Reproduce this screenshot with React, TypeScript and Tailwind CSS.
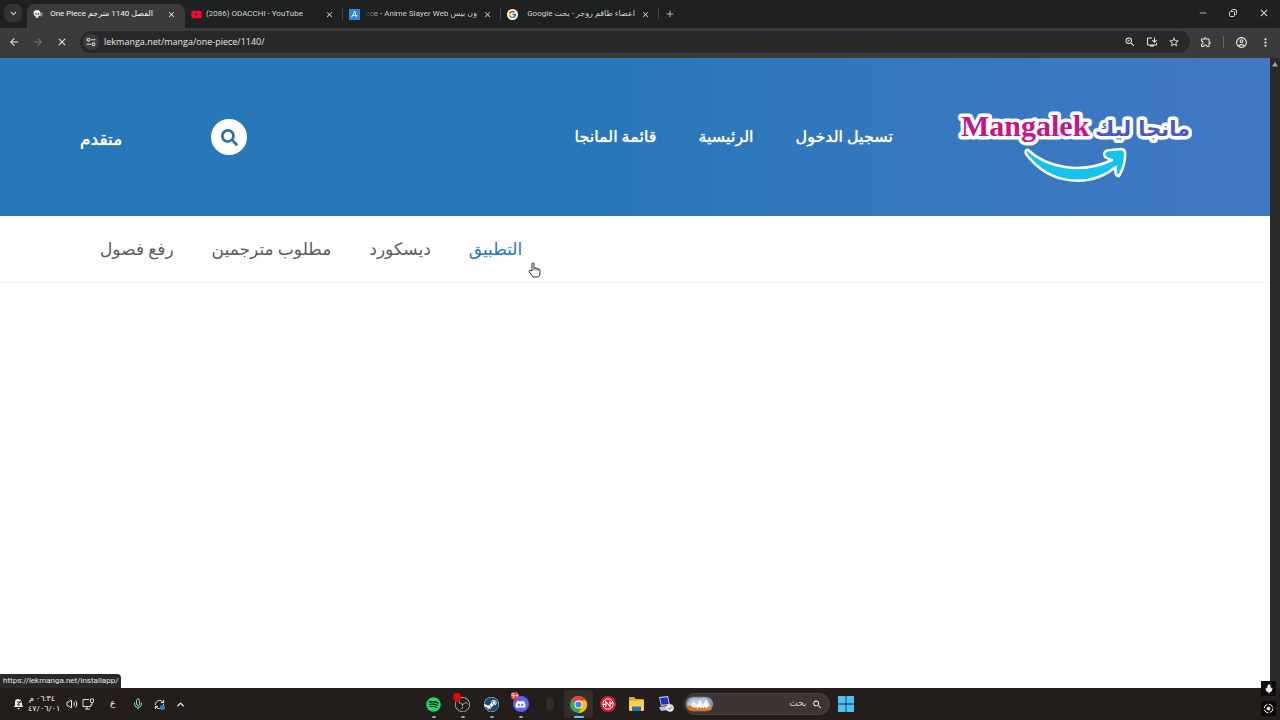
import type { ReactNode } from "react";
import { FcGoogle } from "react-icons/fc";
import { FaDiscord, FaSearch, FaSpotify, FaSteam, FaYoutube } from "react-icons/fa";
import {
  MdArrowBack,
  MdArrowForward,
  MdClose,
  MdInstallDesktop,
  MdMoreVert,
  MdOutlineAccountCircle,
  MdOutlineExtension,
  MdSearch,
  MdStarBorder,
  MdZoomIn,
} from "react-icons/md";
import { ChevronDown, ChevronUp, Mic, Minus, Plus, RefreshCw, Volume2 } from "lucide-react";
import { SiObsstudio } from "react-icons/si";

interface Tab {
  title: string;
  icon: ReactNode;
  rtl?: boolean;
  faded?: boolean;
}

const TABS: Tab[] = [
  { title: "الفصل 1140 مترجم One Piece", icon: <SkullIcon />, rtl: true },
  { title: "(2086) ODACCHI - YouTube", icon: <FaYoutube size={11} color="#ff0033" /> },
  { title: "ون بيس ece - Anime Slayer Web", icon: <SlayerIcon />, rtl: true, faded: true },
  {
    title: "اعضاء طاقم روجر - بحث Google",
    icon: (
      <span className="rounded-full bg-white p-px">
        <FcGoogle size={9} />
      </span>
    ),
    rtl: true,
  },
];

const MENU = ["قائمة المانجا", "الرئيسية", "تسجيل الدخول"];
const SUB_MENU = ["رفع فصول", "مطلوب مترجمين", "ديسكورد", "التطبيق"];

function SkullIcon() {
  return (
    <svg width="10" height="10" viewBox="0 0 10 10">
      <path d="M0 3 1.5 2 9.5 6 9.5 7 8 7.5 1 4ZM5 4 9.5 3.5 9.5 5 6 6Z" fill="#999" />
      <circle cx="4" cy="4.3" r="3.3" fill="#eee" />
      <path d="M2.3 4.3h1.3v1.5H2.3zM4.7 4.3H6v1.5H4.7z" fill="#333" />
      <path d="M2.7 6.8h2.8v2H2.7z" fill="#ddd" />
    </svg>
  );
}

function SlayerIcon() {
  return (
    <svg width="11" height="11" viewBox="0 0 11 11">
      <rect width="11" height="11" fill="#2f87d2" />
      <path d="M2.5 8.5 5.8 2.2 7.5 8.5M3.6 6.5h4.7" fill="none" stroke="#cfe8fb" strokeWidth="1" />
    </svg>
  );
}

function TuneIcon() {
  return (
    <svg width="10" height="10" viewBox="0 0 10 10" fill="none" stroke="#d6d6d6" strokeWidth="1.1">
      <circle cx="2.5" cy="2.7" r="1.4" />
      <path d="M5 2.7h4.5M.5 7.3H5" />
      <circle cx="7.5" cy="7.3" r="1.4" />
    </svg>
  );
}

function Logo() {
  return (
    <svg width="236" height="80" viewBox="0 0 236 80" role="img" aria-label="Mangalek">
      <g strokeLinejoin="round" stroke="#fff" strokeWidth="7" paintOrder="stroke" fontWeight="700">
        <text x="5" y="33" fontSize="30" fill="#c2178a" fontFamily="'Liberation Serif', serif">
          Mangalek
        </text>
        <text x="139" y="33" fontSize="21" fill="#4a58c4" fontFamily="'DejaVu Sans', sans-serif">
          مانجا ليك
        </text>
      </g>
      <path
        d="M72 47C90 64 125 72 156 57Q152 56 149 54Q146 47 155 47L166 46Q170 47 169 53Q169 63 163 73Q158 73 160 64C135 84 95 84 70 51Q69 46 72 47Z"
        fill="#14c4ee"
        stroke="#fff"
        strokeWidth="2.5"
        strokeLinejoin="round"
      />
    </svg>
  );
}

function BrowserTab({ tab, active }: { tab: Tab; active: boolean }) {
  return (
    <div
      className={`flex h-6 w-[158px] items-center gap-1 pb-1 pl-[5px] pr-2 ${
        active ? "rounded-t-lg bg-[#3b3b3b] text-gray-100" : "text-gray-300"
      }`}
    >
      <span className="flex w-3 shrink-0 justify-center">{tab.icon}</span>
      <span
        dir={tab.rtl ? "rtl" : "ltr"}
        className={`min-w-0 grow overflow-hidden whitespace-nowrap ${
          tab.faded ? "[mask-image:linear-gradient(to_right,transparent,black_16px)]" : ""
        } ${active ? "pr-2" : ""}`}
      >
        {tab.title}
      </span>
      <button aria-label="Close tab" className="flex w-3 shrink-0 justify-center">
        <MdClose size={9} />
      </button>
    </div>
  );
}

function TabStrip() {
  return (
    <div className="flex h-7 items-end bg-[#1f2020] pl-1 text-[8px] text-gray-300">
      <button aria-label="Search tabs" className="mb-[6px] flex h-[18px] w-[18px] items-center justify-center rounded-md bg-[#333]">
        <ChevronDown size={9} strokeWidth={3} />
      </button>
      <div className="ml-[5px] flex">
        {TABS.map((tab, i) => (
          <div key={tab.title} className="flex items-center">
            <BrowserTab tab={tab} active={i === 0} />
            {i > 0 && <span className="-ml-px mb-1 h-3 w-px bg-[#444]" />}
          </div>
        ))}
      </div>
      <button aria-label="New tab" className="mb-[9px] ml-[6px]">
        <Plus size={10} />
      </button>
      <div className="mb-[9px] ml-auto flex items-center gap-5 pr-[10px]">
        <button aria-label="Minimize">
          <Minus size={10} />
        </button>
        <button aria-label="Restore">
          <svg width="10" height="10" viewBox="0 0 10 10" fill="none" stroke="currentColor">
            <rect x="1.5" y="3.5" width="5" height="5" rx="1" />
            <path d="M3.5 3V2.5Q3.5 1.5 4.5 1.5H7Q8.5 1.5 8.5 3V5.5Q8.5 6.5 7.5 6.5H7" />
          </svg>
        </button>
        <button aria-label="Close">
          <MdClose size={12} />
        </button>
      </div>
    </div>
  );
}

function Toolbar() {
  return (
    <div className="flex h-[30px] items-center bg-[#3b3b3b] px-2 pb-[2px] text-gray-200">
      <div className="flex gap-3">
        <button aria-label="Back">
          <MdArrowBack size={12} />
        </button>
        <button aria-label="Forward" className="text-gray-500">
          <MdArrowForward size={12} />
        </button>
        <button aria-label="Stop">
          <MdClose size={12} />
        </button>
      </div>
      <div className="ml-3 flex h-[22px] grow items-center gap-1 rounded-full bg-[#282828] pl-[3px] pr-[10px]">
        <button aria-label="Site information" className="flex h-4 w-4 items-center justify-center rounded-full bg-[#3b3b3b]">
          <TuneIcon />
        </button>
        <input
          aria-label="Address"
          className="min-w-0 grow bg-transparent pl-px font-['Open_Sans',sans-serif] text-[9px] text-gray-200 outline-none"
          defaultValue="lekmanga.net/manga/one-piece/1140/"
        />
        <div className="flex items-center gap-[10px]">
          <MdZoomIn size={12} />
          <MdInstallDesktop size={12} />
          <MdStarBorder size={12} />
        </div>
      </div>
      <div className="ml-[10px] flex items-center gap-[11px]">
        <MdOutlineExtension size={12} />
        <span className="h-3 w-px bg-[#666]" />
        <MdOutlineAccountCircle size={13} />
        <MdMoreVert size={13} />
      </div>
    </div>
  );
}

function SiteHeader() {
  return (
    <header className="flex h-[158px] items-center bg-linear-to-r from-[#2777b9] from-45% to-[#4178c4] pl-20 pr-[78px] text-white [text-shadow:0_0_1px_#fff]">
      <a href="#advanced" className="mt-[6px] w-[42px] whitespace-nowrap text-[17px]">
        متقدم
      </a>
      <button aria-label="بحث" className="ml-[89px] flex h-9 w-9 items-center justify-center rounded-full bg-white text-[#2f6fa8]">
        <FaSearch size={17} />
      </button>
      <nav className="ml-auto flex gap-[42px] text-[16px]">
        {MENU.map((item) => (
          <a key={item} href="#menu" className="whitespace-nowrap">
            {item}
          </a>
        ))}
      </nav>
      <a href="#home" className="ml-[63px] mt-3 [text-shadow:none]">
        <Logo />
      </a>
    </header>
  );
}

function SubNav() {
  return (
    <nav className="relative flex h-[67px] items-center gap-[38px] border-b border-gray-100 pl-[100px] pt-[2px] text-[17px] text-[#5c5c5c]">
      {SUB_MENU.map((item) => (
        <a
          key={item}
          href="#submenu"
          className={`whitespace-nowrap ${item === "التطبيق" ? "text-[#2777b9]" : ""}`}
        >
          {item}
        </a>
      ))}
      <svg className="absolute left-[528px] top-[46px]" width="13" height="16" viewBox="0 0 13 16">
        <path
          d="M4 9V2Q4 .8 5 .8T6 2V6Q7 5 8 6.3Q9 5.6 9.8 6.8Q12 6.5 12 8.5V11Q12 13 10.5 15H5Q3.5 12.5 1.2 9.8Q.8 8 2.2 8.3Z"
          fill="#fff"
          stroke="#333"
        />
        <path d="M6 6v2.5M8 6.5v2M10 7v2" stroke="#333" strokeWidth=".8" />
      </svg>
    </nav>
  );
}

function ChromeIcon() {
  return (
    <svg width="17" height="17" viewBox="0 0 18 18">
      <circle cx="9" cy="9" r="9" fill="#34a853" />
      <path d="M9 9 1.2 4.5A9 9 0 0 1 16.8 4.5Z" fill="#ea4335" />
      <path d="M9 4.7H17A9 9 0 0 1 9 18L12.8 11Z" fill="#fbbc04" />
      <circle cx="9" cy="9" r="4.3" fill="#fff" />
      <circle cx="9" cy="9" r="3.3" fill="#4285f4" />
    </svg>
  );
}

function RedAppIcon() {
  return (
    <svg width="16" height="16" viewBox="0 0 16 16" fill="none" stroke="#fff">
      <circle cx="8" cy="8" r="8" fill="#c81e36" stroke="none" />
      <circle cx="8" cy="8" r="5.2" strokeWidth=".9" />
      <path d="M5.8 11V5.5L10 10.5V5M3 9 5.8 8M10 8 13 6.5" strokeWidth="1.1" />
    </svg>
  );
}

function FolderIcon() {
  return (
    <svg width="17" height="16" viewBox="0 0 17 16">
      <path d="M1 1H6L8 3H15Q16 3 16 4V8H1Z" fill="#e0a526" />
      <rect x="1" y="4.5" width="15" height="10.5" rx="1" fill="#fbd04f" />
      <path d="M4 15V11.5Q4 10.5 5 10.5H12Q13 10.5 13 11.5V15Z" fill="#1977c0" />
    </svg>
  );
}

function RemoteIcon() {
  return (
    <svg width="16" height="16" viewBox="0 0 16 16">
      <path d="M1 1 10 0 12 9 3 10Z" fill="#c9d1e4" />
      <path d="M2 2 9.3 1.2 10.8 8 3.6 8.8Z" fill="#1e2fb8" />
      <path d="M1 11 9 10 10 14 3 15Z" fill="#bfc6d2" />
      <circle cx="12" cy="12" r="3.8" fill="#e8e8e8" />
      <path d="m10 12 1.5 1.5L14 10.5" fill="none" stroke="#777" />
    </svg>
  );
}

function SceneIcon() {
  return (
    <svg width="33" height="18" viewBox="0 0 33 18">
      <rect width="33" height="18" rx="9" fill="#8298bd" />
      <path d="M2 8Q6 1 12 2T22 1L27 4 30 12H3Z" fill="#b9c6dc" />
      <path d="M5 12 9 5 13 10 17 4 21 10 25 3 29 13H5Z" fill="#eef0f3" />
      <path d="M2 12Q5 9 9 13T17 13L22 15Q27 9 32 15Q28 18 21 17L8 18Q3 17 2 12Z" fill="#e0701a" />
      <path d="M7 14Q11 11 14 15M24 15Q27 12 29 15" stroke="#ffb347" strokeWidth="1.2" fill="none" />
      <path d="M14 14 17 6 18 14M21 14 24 6 25 14" stroke="#fff" strokeWidth="1.5" fill="none" />
    </svg>
  );
}

function WindowsIcon() {
  return (
    <svg width="16" height="16" viewBox="0 0 16 16" fill="#4cc2f1">
      <path d="M0 0h7.6v7.6H0zM8.4 0H16v7.6H8.4zM0 8.4h7.6V16H0zM8.4 8.4H16V16H8.4z" />
    </svg>
  );
}

function TaskApp({ label, running, active, children }: { label: string; running?: boolean; active?: boolean; children: ReactNode }) {
  return (
    <button
      aria-label={label}
      className={`relative flex h-7 w-[29px] items-center justify-center rounded ${active ? "bg-[#342e2b]" : ""}`}
    >
      {children}
      {running && (
        <span className={`absolute bottom-0 h-[2px] rounded ${active ? "w-[10px] bg-[#65c5f2]" : "w-1 bg-gray-400"}`} />
      )}
    </button>
  );
}

function Taskbar() {
  return (
    <footer className="relative flex h-8 items-center bg-[#231e1c] text-gray-100">
      <div className="flex w-[419px] items-center pl-[13px]">
        <svg width="11" height="12" viewBox="0 0 11 12">
          <path d="M1 9H10L9 7V4Q9 1 5.5 1T2 4V7ZM4 10H7L5.5 11.5Z" fill="#eee" />
          <path d="M6 1h4L7 4h3M4 4h3L4.5 7H7" fill="none" stroke="#231e1c" />
        </svg>
        <div className="ml-1 w-[28px] text-[8px] leading-[10px] whitespace-nowrap">
          <div dir="rtl" className="text-center">٠٦:٣٤ م</div>
          <div dir="ltr">٤٧/٠٦/٠١</div>
        </div>
        <Volume2 size={12} className="ml-[10px]" />
        <svg width="12" height="12" viewBox="0 0 12 12" fill="none" stroke="#ddd" className="ml-1">
          <path d="M7 1.5H1V8.5H9V6M3 11H8M5 9V11M8.5 1H11.5V4Q10 5.5 8.5 4ZM10 5V7" />
        </svg>
        <span className="ml-4 w-2 text-[9px]">ع</span>
        <Mic size={12} className="ml-[14px] text-[#8fd6cf]" />
        <span className="relative ml-[10px]">
          <RefreshCw size={11} />
          <span className="absolute bottom-0 right-0 h-[5px] w-[5px] rounded-full bg-[#2d7fdb]" />
        </span>
        <ChevronUp size={11} strokeWidth={3} className="ml-[10px]" />
      </div>
      <div className="flex items-center">
        <TaskApp label="Spotify" running>
          <FaSpotify size={15} color="#1ed760" />
        </TaskApp>
        <TaskApp label="OBS Studio" running>
          <SiObsstudio size={15} color="#c4c4c4" />
          <span className="absolute left-[5px] top-[3px] h-2 w-2 rounded-full bg-[#f00000]" />
        </TaskApp>
        <TaskApp label="Steam" running>
          <FaSteam size={15} className="rounded-full bg-white text-[#124a78]" />
        </TaskApp>
        <TaskApp label="Discord" running>
          <span className="flex h-4 w-4 items-center justify-center rounded-full bg-[#5865f2]">
            <FaDiscord size={11} />
          </span>
          <span className="absolute left-[5px] top-[2px] flex h-2 items-center rounded-full bg-[#d83c48] text-[7px]">9+</span>
        </TaskApp>
        <TaskApp label="Mouse">
          <span className="h-3 w-2 rounded-full bg-[#302c2a]" />
        </TaskApp>
        <TaskApp label="Chrome" running active>
          <ChromeIcon />
        </TaskApp>
        <TaskApp label="Nox">
          <RedAppIcon />
        </TaskApp>
        <TaskApp label="Files">
          <FolderIcon />
        </TaskApp>
        <TaskApp label="Remote desktop">
          <RemoteIcon />
        </TaskApp>
      </div>
      <div className="ml-1 flex h-[22px] w-[146px] items-center rounded-full border border-[#4a4340] bg-[#3c3532] pl-px pr-[6px]">
        <SceneIcon />
        <input
          dir="rtl"
          aria-label="بحث"
          placeholder="بحث"
          className="min-w-0 grow bg-transparent pr-[6px] text-[9px] outline-none placeholder:text-gray-300"
        />
        <MdSearch size={13} />
      </div>
      <button aria-label="Start" className="ml-2">
        <WindowsIcon />
      </button>
      <div className="absolute bottom-1 right-1 flex flex-col gap-[5px]">
        <span className="flex h-[15px] w-[15px] items-center justify-center bg-[#0c0c0c]">
          <Mic size={10} fill="currentColor" />
        </span>
        <span className="flex h-[15px] w-[15px] items-center justify-center bg-[#0c0c0c]">
          <svg width="11" height="11" viewBox="0 0 11 11" fill="none" stroke="#eee">
            <circle cx="5.5" cy="5.5" r="4.3" strokeDasharray="5.2 1.5" />
            <circle cx="5.5" cy="5.5" r="1.5" fill="#eee" />
          </svg>
        </span>
      </div>
    </footer>
  );
}

export default function App() {
  return (
    <div className="flex min-h-screen flex-col overflow-hidden bg-white font-['Roboto','DejaVu_Sans',sans-serif]">
      <TabStrip />
      <Toolbar />
      <div className="flex grow">
        <main className="relative flex grow flex-col">
          <SiteHeader />
          <SubNav />
          <div className="absolute bottom-0 left-0 rounded-tr bg-[#292929] px-[3px] py-px text-[8px] leading-3 text-gray-200">
            https://lekmanga.net/installapp/
          </div>
        </main>
        <div className="flex w-[10px] justify-center bg-[#2a2a2a] pt-1">
          <svg width="6" height="5" viewBox="0 0 6 5">
            <path d="M3 0 6 4.5H0Z" fill="#a5a5a5" />
          </svg>
        </div>
      </div>
      <Taskbar />
    </div>
  );
}
